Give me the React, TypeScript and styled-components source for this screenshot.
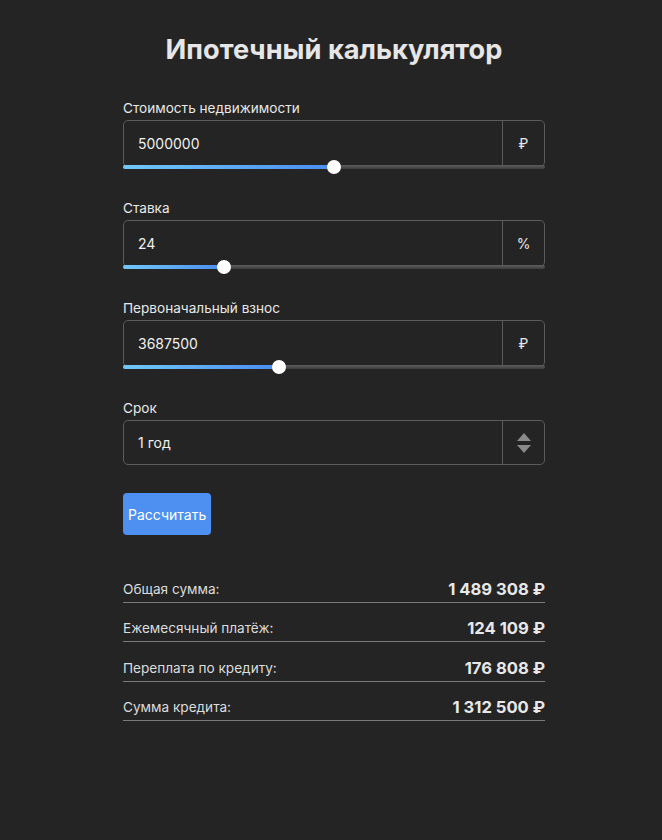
import React from "react";
import styled, { createGlobalStyle } from "styled-components";

const Global = createGlobalStyle`
  html, body { margin: 0; padding: 0; background: #242424; }
  body { font-family: Inter, "Noto Sans", sans-serif; color: #e8e8e8; }
  * { box-sizing: border-box; }
`;

const Page = styled.div`
  min-height: 840px;
  background: #242424;
  padding: 33px 0 0 6px;
  display: flex;
  justify-content: center;
`;

const Container = styled.div`
  width: 422px;
  display: flex;
  flex-direction: column;
`;

const Title = styled.h1`
  margin: 0 0 32px;
  font-size: 27.2px;
  line-height: 34px;
  font-weight: 700;
  text-align: center;
  color: #e6e6e6;
`;

const Field = styled.div`
  display: flex;
  flex-direction: column;
  margin-bottom: 30px;
`;

const Label = styled.div`
  font-size: 13.6px;
  line-height: 17px;
  padding-top: 1px;
  margin-bottom: 3px;
  color: #e8e8e8;
`;

const InputBox = styled.div<{ $h: number }>`
  display: flex;
  height: ${(p) => p.$h}px;
  border: 1px solid #5c5c5c;
  border-radius: 5px;
`;

const Value = styled.div`
  flex: 1;
  display: flex;
  align-items: center;
  padding-left: 14px;
  font-size: 14px;
  color: #f0f0f0;
`;

const Addon = styled.div`
  width: 42px;
  border-left: 1px solid #5c5c5c;
  display: flex;
  align-items: center;
  justify-content: center;
  font-size: 14px;
  color: #e8e8e8;
`;

const Track = styled.div`
  position: relative;
  height: 4px;
  margin-top: -2px;
  border-radius: 2px;
  background: linear-gradient(to bottom, #5e5e5e, #3c3c3c);
`;

const Fill = styled.div`
  height: 100%;
  border-radius: 2px;
  background: linear-gradient(to right, #72c8f8, #4a8cee);
`;

const Thumb = styled.div`
  position: absolute;
  top: 50%;
  width: 14px;
  height: 14px;
  margin-left: -7px;
  margin-top: -7px;
  border-radius: 50%;
  background: #ffffff;
`;

const Button = styled.button`
  align-self: flex-start;
  margin-top: -2px;
  height: 42px;
  padding: 0 5px;
  border: none;
  border-radius: 4px;
  background: #4d90f2;
  color: #ffffff;
  font-family: Inter, "Noto Sans", sans-serif;
  font-size: 14px;
`;

const Results = styled.div`
  margin-top: 29px;
  display: flex;
  flex-direction: column;
`;

const Row = styled.div`
  display: flex;
  justify-content: space-between;
  align-items: center;
  padding-top: 17px;
  padding-bottom: 4px;
  border-bottom: 1px solid #7a7a7a;
  line-height: 17px;
  &:nth-child(3) { padding-top: 18px; }
`;

const RowLabel = styled.span`
  font-size: 13.6px;
  color: #dcdcdc;
`;

const RowValue = styled.span`
  font-size: 16.6px;
  font-weight: 700;
  color: #e8e8e8;
`;

const Arrows = () => (
  <svg width="16" height="22" viewBox="0 0 16 22">
    <polygon points="1,9 15,9 8,1" fill="#8a8a8a" />
    <polygon points="1,13 15,13 8,21" fill="#8a8a8a" />
  </svg>
);

type SliderFieldProps = { label: string; value: string; unit: string; pct: number };

const SliderField = ({ label, value, unit, pct }: SliderFieldProps) => (
  <Field>
    <Label>{label}</Label>
    <InputBox $h={47}>
      <Value>{value}</Value>
      <Addon>{unit}</Addon>
    </InputBox>
    <Track>
      <Fill style={{ width: `${pct}%` }} />
      <Thumb style={{ left: `${pct}%` }} />
    </Track>
  </Field>
);

const results = [
  ["Общая сумма:", "1 489 308 ₽"],
  ["Ежемесячный платёж:", "124 109 ₽"],
  ["Переплата по кредиту:", "176 808 ₽"],
  ["Сумма кредита:", "1 312 500 ₽"],
];

export default function App() {
  return (
    <Page>
      <Global />
      <Container>
        <Title>Ипотечный калькулятор</Title>
        <SliderField label="Стоимость недвижимости" value="5000000" unit="₽" pct={50} />
        <SliderField label="Ставка" value="24" unit="%" pct={24} />
        <SliderField label="Первоначальный взнос" value="3687500" unit="₽" pct={37} />
        <Field>
          <Label>Срок</Label>
          <InputBox $h={45}>
            <Value>1 год</Value>
            <Addon>
              <Arrows />
            </Addon>
          </InputBox>
        </Field>
        <Button>Рассчитать</Button>
        <Results>
          {results.map(([l, v]) => (
            <Row key={l}>
              <RowLabel>{l}</RowLabel>
              <RowValue>{v}</RowValue>
            </Row>
          ))}
        </Results>
      </Container>
    </Page>
  );
}
